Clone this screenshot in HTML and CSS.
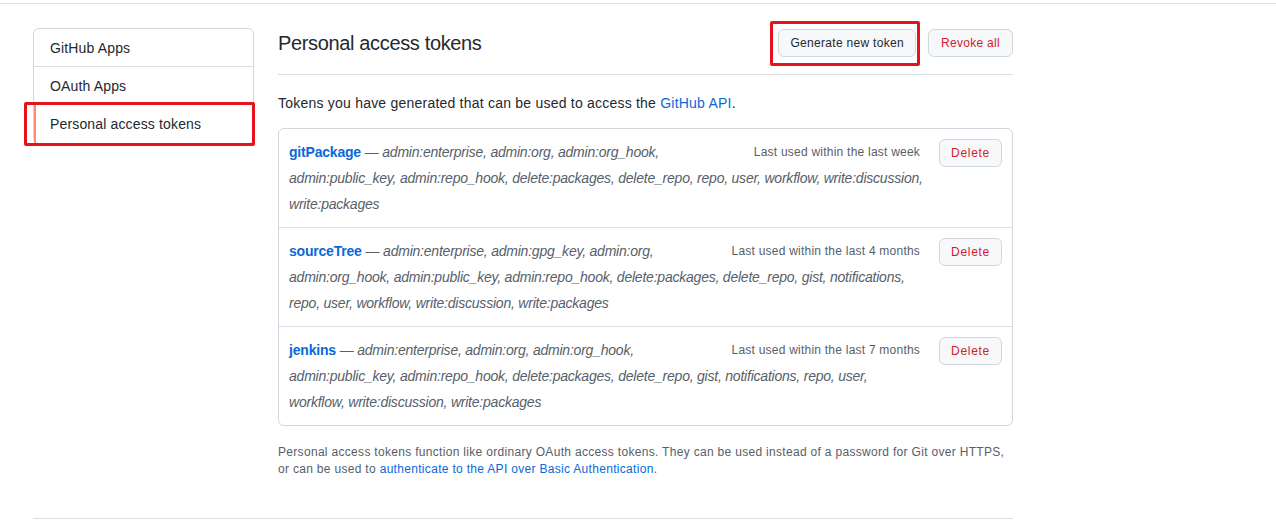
FILE: index.html
```html
<!DOCTYPE html>
<html lang="en">
<head>
<meta charset="utf-8">
<title>Personal access tokens</title>
<link rel="stylesheet" href="styles.css">
</head>
<body>
<div class="topbar"></div>
<div class="layout">
  <nav class="menu">
    <a class="menu-item">GitHub Apps</a>
    <a class="menu-item">OAuth Apps</a>
    <a class="menu-item selected">Personal access tokens<span class="mark mark-nav"></span></a>
  </nav>
  <main class="main">
    <div class="subhead">
      <h2 class="subhead-title">Personal access tokens</h2>
      <div class="subhead-actions">
        <button class="btn btn-gen">Generate new token<span class="mark mark-gen"></span></button>
        <button class="btn btn-danger btn-revoke">Revoke all</button>
      </div>
    </div>
    <p class="intro">Tokens you have generated that can be used to access the <a class="link">GitHub API</a>.</p>
    <div class="box">
      <div class="token">
        <button class="btn btn-danger btn-sm">Delete</button>
        <span class="last-used">Last used within the last week</span>
        <a class="token-name">gitPackage</a> <span class="scopes">— <em>admin:enterprise, admin:org, admin:org_hook, admin:public_key, admin:repo_hook, delete:packages, delete_repo, repo, user, workflow, write:discussion, write:packages</em></span>
      </div>
      <div class="token">
        <button class="btn btn-danger btn-sm">Delete</button>
        <span class="last-used">Last used within the last 4 months</span>
        <a class="token-name">sourceTree</a> <span class="scopes">— <em>admin:enterprise, admin:gpg_key, admin:org, admin:org_hook, admin:public_key, admin:repo_hook, delete:packages, delete_repo, gist, notifications, repo, user, workflow, write:discussion, write:packages</em></span>
      </div>
      <div class="token">
        <button class="btn btn-danger btn-sm">Delete</button>
        <span class="last-used">Last used within the last 7 months</span>
        <a class="token-name">jenkins</a> <span class="scopes">— <em>admin:enterprise, admin:org, admin:org_hook, admin:public_key, admin:repo_hook, delete:packages, delete_repo, gist, notifications, repo, user, workflow, write:discussion, write:packages</em></span>
      </div>
    </div>
    <p class="note">Personal access tokens function like ordinary OAuth access tokens. They can be used instead of a password for Git over HTTPS,<br>or can be used to <a class="link">authenticate to the API over Basic Authentication</a>.</p>
  </main>
</div>
<div class="footer-line"></div>
</body>
</html>
```

FILE: styles.css
```css
* { box-sizing: border-box; }
body {
  margin: 0;
  font-family: "Liberation Sans", Arial, sans-serif;
  font-size: 14px;
  line-height: 1.5;
  color: #24292f;
  background: #fff;
}
.topbar {
  height: 4px;
  border-bottom: 1px solid #d8dee4;
}
.layout {
  display: flex;
  gap: 24px;
  width: 1013px;
  padding-left: 33px;
  padding-top: 24px;
}
.menu {
  width: 221px;
  flex: none;
  align-self: flex-start;
  border: 1px solid #d0d7de;
  border-radius: 6px;
  display: flex;
  flex-direction: column;
}
.menu-item {
  position: relative;
  display: block;
  height: 38px;
  padding: 1px 16px 0;
  line-height: 36px;
  font-size: 14px;
  letter-spacing: 0.15px;
  color: #24292f;
  border-bottom: 1px solid #d8dee4;
}
.menu-item:last-child { border-bottom: 0; }
.menu-item.selected {
  border-left: 2px solid #fd8c73;
  padding-left: 14px;
}
.main {
  flex: 1;
  min-width: 0;
}
.subhead {
  display: flex;
  align-items: center;
  justify-content: space-between;
  height: 47px;
  padding-bottom: 16px;
  border-bottom: 1px solid #d8dee4;
}
.subhead-title {
  margin: 0;
  font-size: 20px;
  font-weight: 400;
  line-height: 30px;
  letter-spacing: -0.35px;
}
.subhead-actions {
  display: flex;
  gap: 12px;
}
.btn {
  position: relative;
  height: 28px;
  padding: 0 11px;
  font-family: inherit;
  font-size: 12px;
  line-height: 26px;
  font-weight: 500;
  letter-spacing: 0.3px;
  color: #24292f;
  background: #f6f8fa;
  border: 1px solid #d0d7de;
  border-radius: 6px;
}
.btn-danger { color: #cf222e; }
.btn-revoke { padding: 0 12px; letter-spacing: 0.3px; }
.btn-sm { float: right; margin-left: 16px; padding: 0 11px; letter-spacing: 0.7px; }
.mark {
  position: absolute;
  border: 3px solid #e3141b;
  border-radius: 2px;
  pointer-events: none;
}
.mark-gen { left: -9px; right: -5px; top: -9px; bottom: -10px; }
.mark-nav { left: -12px; right: -2px; top: -3px; bottom: -3px; }
.intro {
  margin: 18px 0 14px;
  line-height: 21px;
  letter-spacing: 0.22px;
}
.link { color: #0969da; text-decoration: none; }
.box {
  border: 1px solid #d0d7de;
  border-radius: 6px;
}
.token {
  padding: 10px;
  line-height: 26px;
  border-top: 1px solid #d8dee4;
  color: #57606a;
}
.token:first-child { border-top: 0; }
.token::after { content: ""; display: block; clear: both; }
.token-name {
  color: #0969da;
  font-weight: 700;
  letter-spacing: -0.2px;
}
.scopes {
  font-style: italic;
  color: #57606a;
  letter-spacing: -0.22px;
}
.last-used {
  float: right;
  margin-right: 3px;
  font-size: 12px;
  letter-spacing: 0.23px;
  color: #57606a;
}
.note {
  margin: 18px 0 0;
  font-size: 12px;
  line-height: 17px;
  letter-spacing: 0.31px;
  color: #57606a;
}
.footer-line {
  width: 980px;
  margin-left: 33px;
  margin-top: 40px;
  border-top: 1px solid #d8dee4;
}
```
